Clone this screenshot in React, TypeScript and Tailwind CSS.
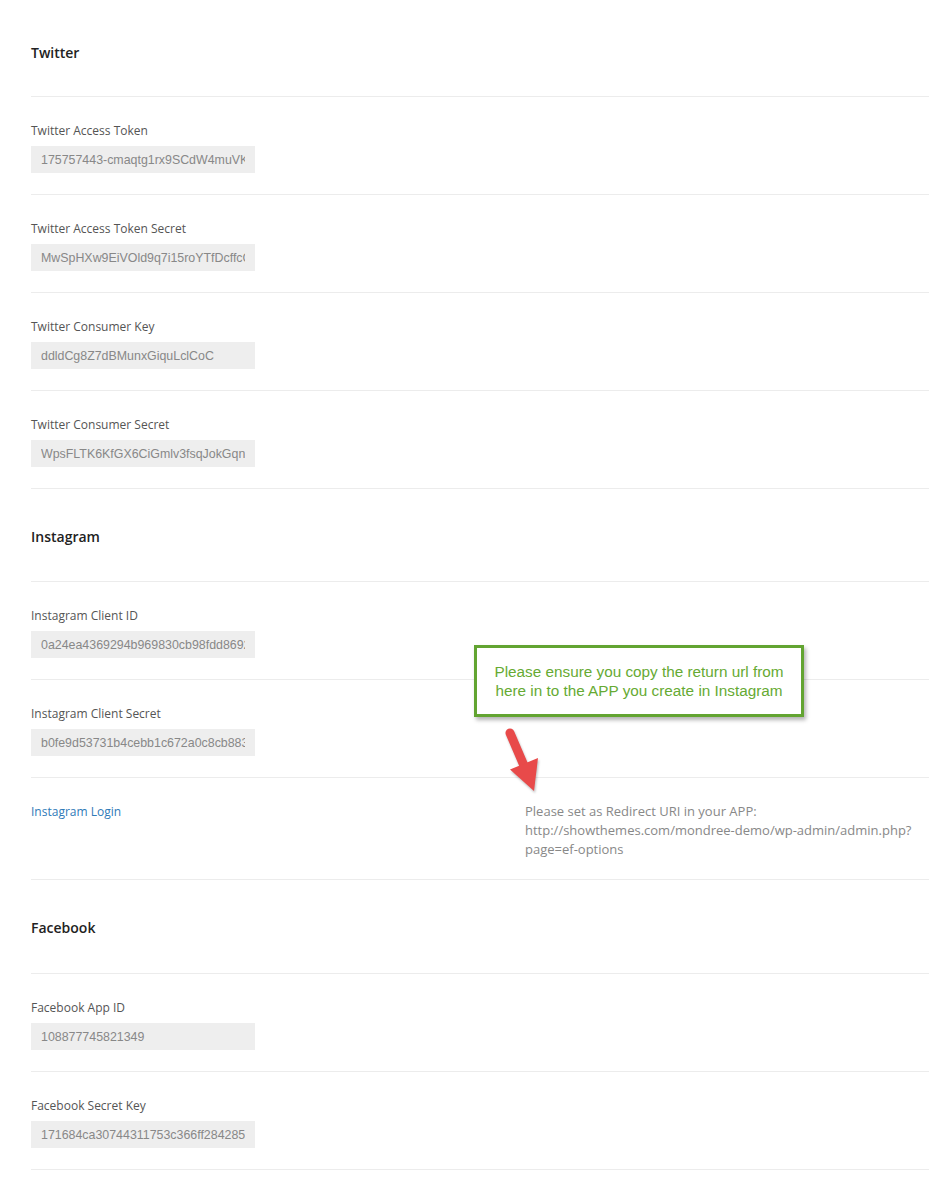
import React from "react";

const font = "font-['Open_Sans',_'Liberation_Sans',_sans-serif]";

function Heading({ title, first, extra }: { title: string; first?: boolean; extra?: boolean }) {
  return (
    <div
      className={`border-b border-[#ececec] ${first ? "pt-[43px] pb-[33px]" : extra ? "pt-[38px] pb-[35px]" : "pt-[38px] pb-[34px]"}`}
    >
      <h2 className="text-[14px] leading-[20px] font-semibold text-[#222]">{title}</h2>
    </div>
  );
}

function Field({ label, value }: { label: string; value: string }) {
  return (
    <div className="border-b border-[#ececec] pt-[25px] pb-[21px]">
      <div className="text-[12px] leading-[18px] text-[#555]">{label}</div>
      <input
        readOnly
        value={value}
        className="mt-[6px] block h-[27px] w-[224px] bg-[#eeeeee] px-[10px] text-[12.4px] text-[#888] font-['Liberation_Sans',_Arial,_sans-serif] outline-none border-0"
      />
    </div>
  );
}

export default function App() {
  return (
    <div className={`relative min-h-[1195px] w-full bg-white ${font}`}>
      <div className="pl-[31px]">
        <Heading title="Twitter" first />
        <Field label="Twitter Access Token" value="175757443-cmaqtg1rx9SCdW4muVKpZr8eQh2Lw" />
        <Field label="Twitter Access Token Secret" value="MwSpHXw9EiVOld9q7i15roYTfDcffcQ8zTk3" />
        <Field label="Twitter Consumer Key" value="ddldCg8Z7dBMunxGiquLclCoC" />
        <Field label="Twitter Consumer Secret" value="WpsFLTK6KfGX6CiGmlv3fsqJokGqnDa4Rt" />

        <Heading title="Instagram" />
        <Field label="Instagram Client ID" value="0a24ea4369294b969830cb98fdd86923" />
        <Field label="Instagram Client Secret" value="b0fe9d53731b4cebb1c672a0c8cb8831" />

        <div className="flex border-b border-[#ececec] pt-[24px] pb-[20px] leading-[19px]">
          <div className="w-[494px] shrink-0 text-[12px]">
            <a className="text-[#2f7ab8]">Instagram Login</a>
          </div>
          <div className="flex-1 text-[13px] text-[#888]">
            <div>Please set as Redirect URI in your APP:</div>
            <div>http://showthemes.com/mondree-demo/wp-admin/admin.php?</div>
            <div>page=ef-options</div>
          </div>
        </div>

        <Heading title="Facebook" extra />
        <Field label="Facebook App ID" value="108877745821349" />
        <Field label="Facebook Secret Key" value="171684ca30744311753c366ff2842853" />
      </div>

      {/* Callout annotation */}
      <div className="absolute left-[474px] top-[645px] flex h-[72px] w-[330px] items-center justify-center border-[3px] border-[#62a431] bg-white shadow-[2px_3px_4px_rgba(0,0,0,0.3)]">
        <p className="text-center font-['Liberation_Sans',_Arial,_sans-serif] text-[15.3px] leading-[19px] text-[#66aa33]">
          Please ensure you copy the return url from
          <br />
          here in to the APP you create in Instagram
        </p>
      </div>

      {/* Arrow */}
      <svg
        className="absolute left-[495px] top-[720px] drop-shadow-[1px_2px_1px_rgba(0,0,0,0.25)]"
        width="60"
        height="80"
        viewBox="495 720 60 80"
      >
        <line x1="510" y1="733" x2="525" y2="768" stroke="#e84a4a" strokeWidth="9" strokeLinecap="round" />
        <polygon points="534,791 510,769.5 538,758" fill="#e84a4a" />
      </svg>
    </div>
  );
}
